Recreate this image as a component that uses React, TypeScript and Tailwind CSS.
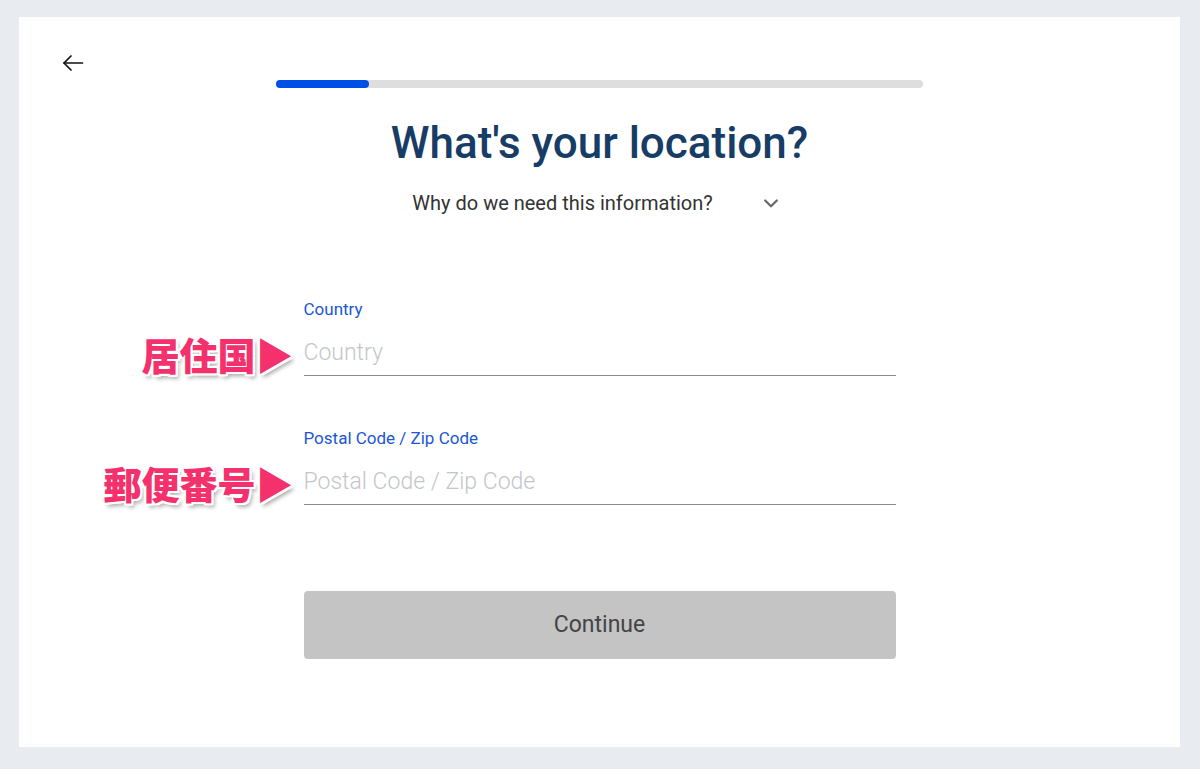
import React from "react";

const annot =
  "absolute right-[calc(100%+10px)] top-1/2 -translate-y-1/2 whitespace-nowrap text-[38px] leading-none font-black text-[#f4316c] [font-family:'Noto_Sans_CJK_JP',sans-serif] [text-shadow:2px_0_0_#fff,-2px_0_0_#fff,0_2px_0_#fff,0_-2px_0_#fff,2px_2px_0_#fff,-2px_-2px_0_#fff,2px_-2px_0_#fff,-2px_2px_0_#fff,3px_4px_4px_rgba(0,0,0,0.35)]";

function Field({ label, placeholder, note }: { label: string; placeholder: string; note: string }) {
  return (
    <div className="w-[592px]">
      <div className="text-[17px] leading-[20px] text-[#1a56d6]">{label}</div>
      <div className="relative mt-[13px] border-b border-[#8c8c8c] pb-[3px]">
        <span className={annot}>{note}</span>
        <input
          placeholder={placeholder}
          className="h-[40px] w-full bg-transparent text-[23px] font-light text-[#333] outline-none placeholder:text-[#c3c6cc]"
        />
      </div>
    </div>
  );
}

export default function App() {
  return (
    <div className="h-[769px] w-[1200px] bg-[#e8ebf0] pl-[19px] pt-[17px] [font-family:Roboto,'Noto_Sans',sans-serif]">
      <div className="flex h-[730px] w-[1161px] flex-col items-center bg-white pt-[34px]">
        <div className="flex h-[24px] w-full items-center px-[42px]">
          <svg width="24" height="24" viewBox="0 0 24 24" fill="none" stroke="#111" strokeWidth="1.7" strokeLinecap="round" strokeLinejoin="round">
            <path d="M21.5 12H3" />
            <path d="M10 5l-7 7 7 7" />
          </svg>
        </div>
        <div className="mt-[5px] h-[8px] w-[647px] rounded-full bg-[#dedede]">
          <div className="h-full w-[93px] rounded-full bg-[#0050e6]" />
        </div>
        <h1 className="mt-[29px] text-[44px] leading-[52px] font-medium text-[#173c66]">What's your location?</h1>
        <div className="mt-[20px] mr-[6px] flex items-center">
          <span className="text-[20px] leading-[28px] text-[#333]">Why do we need this information?</span>
          <svg className="ml-[48px]" width="20" height="20" viewBox="0 0 24 24" fill="none" stroke="#666" strokeWidth="2.6" strokeLinecap="round" strokeLinejoin="round">
            <path d="M5 9l7 7 7-7" />
          </svg>
        </div>
        <div className="mt-[82px]">
          <Field label="Country" placeholder="Country" note="居住国▶" />
        </div>
        <div className="mt-[52px]">
          <Field label="Postal Code / Zip Code" placeholder="Postal Code / Zip Code" note="郵便番号▶" />
        </div>
        <button className="mt-[86px] h-[68px] w-[592px] rounded-[4px] bg-[#c4c4c4] text-[23px] text-[#444]">
          Continue
        </button>
      </div>
    </div>
  );
}
